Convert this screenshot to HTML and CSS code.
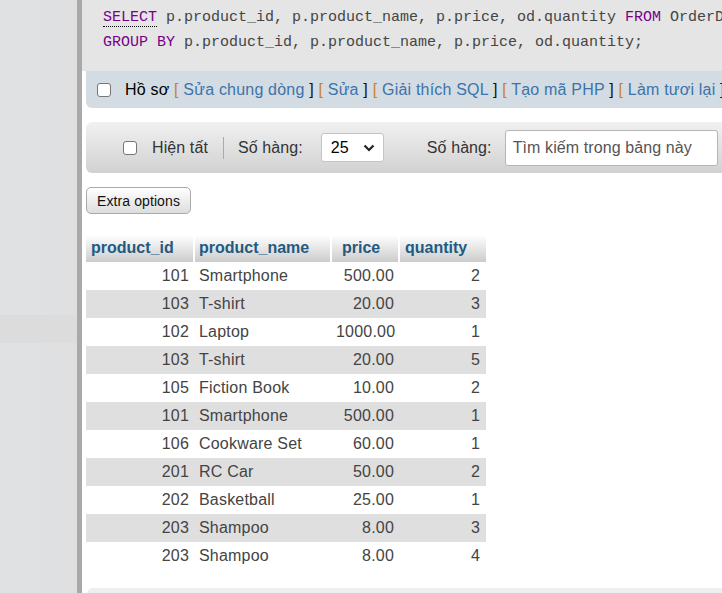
FILE: index.html
```html
<!DOCTYPE html>
<html lang="vi">
<head>
<meta charset="utf-8">
<title>phpMyAdmin</title>
<link rel="stylesheet" href="styles.css">
</head>
<body>
<div class="page">
  <aside class="sidebar">
    <div class="side-item"></div>
  </aside>
  <main class="main">
    <div class="sql"><span class="kw sel">SELECT</span> p.product_id, p.product_name, p.price, od.quantity <span class="kw">FROM</span> OrderDetails od
<span class="kw">GROUP BY</span> p.product_id, p.product_name, p.price, od.quantity;</div>
    <div class="sql-tools">
      <span class="cbox"></span>
      <span class="tools-text">Hồ sơ <span class="ob">[</span> <a class="lnk">Sửa chung dòng</a> <span class="cb">]</span> <span class="ob">[</span> <a class="lnk">Sửa</a> <span class="cb">]</span> <span class="ob">[</span> <a class="lnk">Giải thích SQL</a> <span class="cb">]</span> <span class="ob">[</span> <a class="lnk">Tạo mã PHP</a> <span class="cb">]</span> <span class="ob">[</span> <a class="lnk">Làm tươi lại</a> <span class="cb">]</span></span>
    </div>
    <div class="navbar">
      <span class="cbox"></span>
      <span class="nav-label show-all">Hiện tất</span>
      <span class="sep"></span>
      <span class="nav-label">Số hàng:</span>
      <span class="select"><span class="sel-val">25</span><svg class="chev" width="12" height="8" viewBox="0 0 12 8"><path d="M1.5 1.5 L6 6 L10.5 1.5" fill="none" stroke="#222" stroke-width="2.2"/></svg></span>
      <span class="nav-label filter-label">Số hàng:</span>
      <span class="search">Tìm kiếm trong bảng này</span>
    </div>
    <div class="btn-row"><span class="btn">Extra options</span></div>
    <table class="data">
      <thead>
        <tr><th class="c1">product_id</th><th class="c2">product_name</th><th class="c3">price</th><th class="c4">quantity</th></tr>
      </thead>
      <tbody>
        <tr><td class="num">101</td><td>Smartphone</td><td class="num">500.00</td><td class="num">2</td></tr>
        <tr><td class="num">103</td><td>T-shirt</td><td class="num">20.00</td><td class="num">3</td></tr>
        <tr><td class="num">102</td><td>Laptop</td><td class="num">1000.00</td><td class="num">1</td></tr>
        <tr><td class="num">103</td><td>T-shirt</td><td class="num">20.00</td><td class="num">5</td></tr>
        <tr><td class="num">105</td><td>Fiction Book</td><td class="num">10.00</td><td class="num">2</td></tr>
        <tr><td class="num">101</td><td>Smartphone</td><td class="num">500.00</td><td class="num">1</td></tr>
        <tr><td class="num">106</td><td>Cookware Set</td><td class="num">60.00</td><td class="num">1</td></tr>
        <tr><td class="num">201</td><td>RC Car</td><td class="num">50.00</td><td class="num">2</td></tr>
        <tr><td class="num">202</td><td>Basketball</td><td class="num">25.00</td><td class="num">1</td></tr>
        <tr><td class="num">203</td><td>Shampoo</td><td class="num">8.00</td><td class="num">3</td></tr>
        <tr><td class="num">203</td><td>Shampoo</td><td class="num">8.00</td><td class="num">4</td></tr>
      </tbody>
    </table>
    <div class="next-box"></div>
  </main>
</div>
</body>
</html>
```
FILE: styles.css
```css
html, body {
  margin: 0;
  padding: 0;
  background: #fff;
}
body {
  font-family: "Liberation Sans", Arial, sans-serif;
  font-size: 16px;
  color: #444;
}
.page {
  display: flex;
  width: 722px;
  height: 593px;
  overflow: hidden;
}
.sidebar {
  width: 77px;
  flex: 0 0 77px;
  background: linear-gradient(90deg, #dfe1e3, #e0e0e1);
  border-right: 5px solid #a9a9a9;
  padding-top: 315px;
  box-sizing: content-box;
}
.side-item {
  height: 28px;
  background: #dcdcdc;
}
.main {
  flex: 1;
  min-width: 0;
  overflow: hidden;
}
.sql {
  background: #e5e5e5;
  font-family: "Liberation Mono", "DejaVu Sans Mono", monospace;
  font-size: 15px;
  line-height: 25px;
  color: #444;
  white-space: pre;
  padding: 5px 0 16px 21px;
  height: 50px;
}
.kw {
  color: #770088;
}
.sel {
  border-bottom: 1px dotted #000;
}
.sql-tools {
  margin-left: 4px;
  height: 37px;
  background: #d3dce3;
  border-radius: 0 0 0 6px;
  display: flex;
  align-items: center;
  padding-left: 11px;
  white-space: nowrap;
  color: #000;
  letter-spacing: 0.2px;
}
.cbox {
  display: inline-block;
  width: 12px;
  height: 12px;
  border: 1px solid #767676;
  border-radius: 3px;
  background: #fff;
  flex: 0 0 auto;
}
.tools-text {
  margin-left: 14px;
}
.ob {
  color: #c8832a;
}
.cb {
  color: #111;
}
.lnk {
  color: #3d73ab;
}
.navbar {
  margin: 14px 0 0 4px;
  height: 51px;
  border-radius: 6px 0 0 6px;
  background: linear-gradient(#f1f1f1, #d1d1d1);
  display: flex;
  align-items: center;
  padding-left: 37px;
  white-space: nowrap;
  letter-spacing: 0.1px;
}
.nav-label {
  color: #333;
}
.show-all {
  margin-left: 15px;
}
.sep {
  width: 1px;
  height: 22px;
  background: #aaa;
  margin: 0 14px 0 15px;
}
.select {
  margin-left: 18px;
  width: 63px;
  height: 29px;
  box-sizing: border-box;
  background: #fff;
  border: 1px solid #c4c4c4;
  border-radius: 3px;
  display: flex;
  align-items: center;
  padding-left: 9px;
  color: #000;
}
.sel-val {
  flex: 1;
}
.chev {
  margin-right: 8px;
}
.filter-label {
  margin-left: 43px;
}
.search {
  margin-left: 13px;
  width: 213px;
  height: 36px;
  box-sizing: border-box;
  background: #fff;
  border: 1px solid #b5b5b5;
  border-radius: 3px;
  display: flex;
  align-items: center;
  padding-left: 7px;
  color: #555;
}
.btn-row {
  margin: 14px 0 0 4px;
  display: flex;
}
.btn {
  display: flex;
  align-items: center;
  justify-content: center;
  width: 105px;
  height: 27px;
  box-sizing: border-box;
  border: 1px solid #aaa;
  border-radius: 5px;
  background: linear-gradient(#ffffff, #dddddd);
  font-size: 14px;
  color: #111;
  letter-spacing: 0.1px;
}
.data {
  margin: 21px 0 0 4px;
  border-collapse: separate;
  border-spacing: 0;
  table-layout: fixed;
  width: 400px;
  letter-spacing: 0.2px;
}
.data th {
  box-sizing: border-box;
  height: 27px;
  padding: 0 0 2px 5px;
  text-align: left;
  font-weight: bold;
  color: #235a81;
  background: linear-gradient(#ffffff, #cccccc);
  border-right: 2px solid #fff;
  white-space: nowrap;
  letter-spacing: 0;
}
.data th.c1 { width: 109px; }
.data th.c2 { width: 137px; padding-left: 4px; }
.data th.c3 { width: 68px; padding-left: 10px; }
.data th.c4 { width: 86px; border-right: 0; }
.data td {
  height: 28px;
  padding: 0 6px 0 4px;
  color: #444;
  white-space: nowrap;
}
.data td.num {
  text-align: right;
}
.data tbody tr:nth-child(even) td {
  background: #dfdfdf;
}
.next-box {
  margin: 18px 0 0 5px;
  height: 40px;
  background: #eee;
  border-radius: 6px 0 0 0;
}
```
